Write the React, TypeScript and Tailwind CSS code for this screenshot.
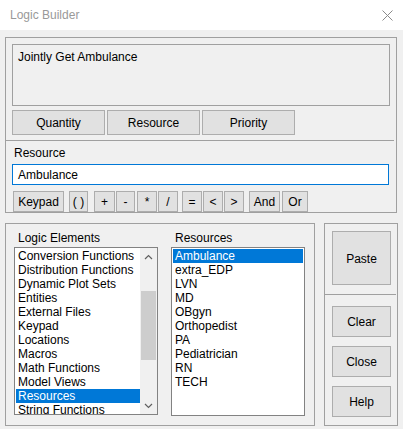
import React from "react";

function Btn({ className, children }: { className: string; children: React.ReactNode }) {
  return (
    <div
      className={
        "flex items-center justify-center border border-[#adadad] bg-[#e1e1e1] text-black shrink-0 pt-px " +
        className
      }
    >
      {children}
    </div>
  );
}

const logicItems = [
  "Conversion Functions",
  "Distribution Functions",
  "Dynamic Plot Sets",
  "Entities",
  "External Files",
  "Keypad",
  "Locations",
  "Macros",
  "Math Functions",
  "Model Views",
  "Resources",
  "String Functions",
];

const resourceItems = [
  "Ambulance",
  "extra_EDP",
  "LVN",
  "MD",
  "OBgyn",
  "Orthopedist",
  "PA",
  "Pediatrician",
  "RN",
  "TECH",
];

function Row({ text, selected }: { text: string; selected?: boolean }) {
  return (
    <div
      className={
        "h-[14px] leading-[14px] pl-[2px] whitespace-nowrap shrink-0 " +
        (selected ? "bg-[#0078d7] text-white" : "text-black")
      }
    >
      {text}
    </div>
  );
}

export default function App() {
  return (
    <div className="w-[403px] h-[429px] bg-[#f0f0f0] font-['Liberation_Sans',Arial,sans-serif] text-[12px] leading-[14px] text-black overflow-hidden">
      {/* Title bar */}
      <div className="h-[30px] bg-white flex items-center justify-between pl-[10px] pr-[10px]">
        <span className="text-[#999999] text-[12px]">Logic Builder</span>
        <svg width="11" height="11" viewBox="0 0 11 11">
          <path d="M0.5 0.5 L10.5 10.5 M10.5 0.5 L0.5 10.5" stroke="#8a8a8a" strokeWidth="1" />
        </svg>
      </div>

      <div className="pl-[5px] pt-[7px]">
        {/* Upper frame */}
        <div className="w-[392px] h-[176px] border border-[#a0a0a0] flex flex-col">
          <div className="ml-[6px] mt-[6px] w-[378px] h-[63px] border border-[#a0a0a0] pl-[5px] pt-[5px]">
            Jointly Get Ambulance
          </div>
          <div className="flex ml-[6px] mt-[4px] gap-[2px]">
            <Btn className="w-[93px] h-[25px]">Quantity</Btn>
            <Btn className="w-[93px] h-[25px]">Resource</Btn>
            <Btn className="w-[93px] h-[25px]">Priority</Btn>
          </div>
          <div className="ml-[-1px] mt-[5px] w-[389px] h-px bg-[#a0a0a0]" />
          <div className="ml-[8px] mt-[6px]">Resource</div>
          <div className="ml-[6px] mt-[4px] w-[377px] h-[21px] border border-[#0078d7] bg-white flex items-center pl-[5px] pt-px">
            Ambulance
          </div>
          <div className="flex ml-[7px] mt-[6px]">
            <Btn className="w-[51px] h-[21px]">Keypad</Btn>
            <Btn className="ml-[5px] w-[19px] h-[21px]">( )</Btn>
            <Btn className="ml-[6px] w-[21px] h-[21px]">+</Btn>
            <Btn className="ml-[1px] w-[19px] h-[21px]">-</Btn>
            <Btn className="ml-[2px] w-[20px] h-[21px]">*</Btn>
            <Btn className="ml-[1px] w-[20px] h-[21px]">/</Btn>
            <Btn className="ml-[4px] w-[20px] h-[21px]">=</Btn>
            <Btn className="ml-[1px] w-[20px] h-[21px]">&lt;</Btn>
            <Btn className="ml-[1px] w-[20px] h-[21px]">&gt;</Btn>
            <Btn className="ml-[5px] w-[31px] h-[21px]">And</Btn>
            <Btn className="ml-[2px] w-[26px] h-[21px]">Or</Btn>
          </div>
        </div>

        {/* Lower section */}
        <div className="flex mt-[10px]">
          <div className="w-[310px] h-[203px] border border-[#a0a0a0] flex flex-col">
            <div className="flex mt-[7px]">
              <div className="w-[157px] ml-[8px] pl-[4px]">Logic Elements</div>
              <div className="pl-[4px]">Resources</div>
            </div>
            <div className="flex mt-[2px]">
              <div className="ml-[8px] w-[144px] h-[168px] border border-[#828282] bg-white flex">
                <div className="w-[125px] pl-px pt-px flex flex-col overflow-hidden">
                  {logicItems.map((t) => (
                    <Row key={t} text={t} selected={t === "Resources"} />
                  ))}
                </div>
                <div className="w-[17px] bg-[#f0f0f0] flex flex-col">
                  <div className="h-[17px] flex items-center justify-center">
                    <svg width="9" height="6" viewBox="0 0 9 6">
                      <path d="M1 5 L4.5 1.5 L8 5" stroke="#606060" strokeWidth="1.2" fill="none" />
                    </svg>
                  </div>
                  <div className="flex-1 flex flex-col">
                    <div className="mt-[26px] mx-px h-[69px] bg-[#cdcdcd]" />
                  </div>
                  <div className="h-[17px] flex items-center justify-center">
                    <svg width="9" height="6" viewBox="0 0 9 6">
                      <path d="M1 1 L4.5 4.5 L8 1" stroke="#606060" strokeWidth="1.2" fill="none" />
                    </svg>
                  </div>
                </div>
              </div>
              <div className="ml-[13px] w-[134px] h-[169px] border border-[#828282] bg-white pl-px pt-px pr-px flex flex-col">
                {resourceItems.map((t) => (
                  <Row key={t} text={t} selected={t === "Ambulance"} />
                ))}
              </div>
            </div>
          </div>

          <div className="ml-[9px] w-[74px] h-[203px] border border-[#a0a0a0] flex flex-col">
            <Btn className="ml-[7px] mt-[7px] w-[59px] h-[54px]">Paste</Btn>
            <div className="mt-[9px] w-[71px] h-px bg-[#a0a0a0]" />
            <Btn className="ml-[7px] mt-[11px] w-[59px] h-[31px]">Clear</Btn>
            <Btn className="ml-[7px] mt-[9px] w-[59px] h-[31px]">Close</Btn>
            <Btn className="ml-[7px] mt-[9px] w-[59px] h-[31px]">Help</Btn>
          </div>
        </div>
      </div>
    </div>
  );
}
